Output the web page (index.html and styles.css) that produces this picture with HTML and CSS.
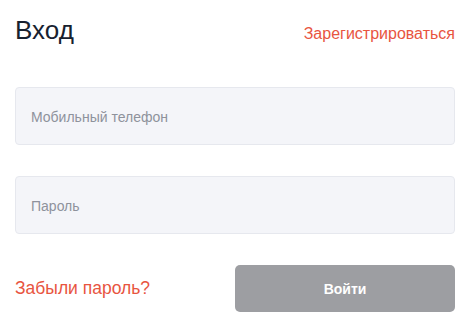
FILE: index.html
```html
<!DOCTYPE html>
<html lang="ru">
<head>
    <meta charset="UTF-8">
    <meta name="viewport" content="width=device-width, initial-scale=1.0">
    <title>Вход</title>
    <link rel="stylesheet" href="styles.css">
</head>
<body>
    <div class="login">
        <div class="login-head">
            <h1>Вход</h1>
            <a href="#" class="link">Зарегистрироваться</a>
        </div>
        <form class="login-form">
            <input type="tel" class="field" placeholder="Мобильный телефон">
            <input type="password" class="field" placeholder="Пароль">
            <div class="login-foot">
                <a href="#" class="link forgot">Забыли пароль?</a>
                <button type="submit" class="submit-btn">Войти</button>
            </div>
        </form>
    </div>
</body>
</html>
```

FILE: styles.css
```css
body {
    font-family: "Liberation Sans", Arial, sans-serif;
    margin: 0;
    padding: 0;
    background-color: #ffffff;
}
.login {
    padding: 12px 12px 0 15px;
}
.login-head {
    display: flex;
    justify-content: space-between;
    align-items: baseline;
    height: 40px;
}
.login-head h1 {
    margin: 0;
    font-size: 26px;
    font-weight: normal;
    color: #17212f;
    line-height: 36px;
}
.link {
    color: #e8553f;
    text-decoration: none;
    font-size: 16px;
}
.login-form {
    display: flex;
    flex-direction: column;
    margin-top: 35px;
}
.field {
    height: 58px;
    box-sizing: border-box;
    margin-bottom: 31px;
    padding: 2px 15px 0;
    background-color: #f4f5f9;
    border: 1px solid #e6e8ee;
    border-radius: 4px;
    font-family: inherit;
    font-size: 14px;
    color: #17212f;
    outline: none;
}
.field::placeholder {
    color: #8e929c;
}
.login-foot {
    display: flex;
    justify-content: space-between;
    align-items: center;
}
.forgot {
    font-size: 17.5px;
}
.submit-btn {
    width: 220px;
    height: 47px;
    background-color: #9d9ea2;
    border: none;
    border-radius: 5px;
    color: white;
    font-family: inherit;
    font-size: 14px;
    font-weight: bold;
    cursor: pointer;
}
```
